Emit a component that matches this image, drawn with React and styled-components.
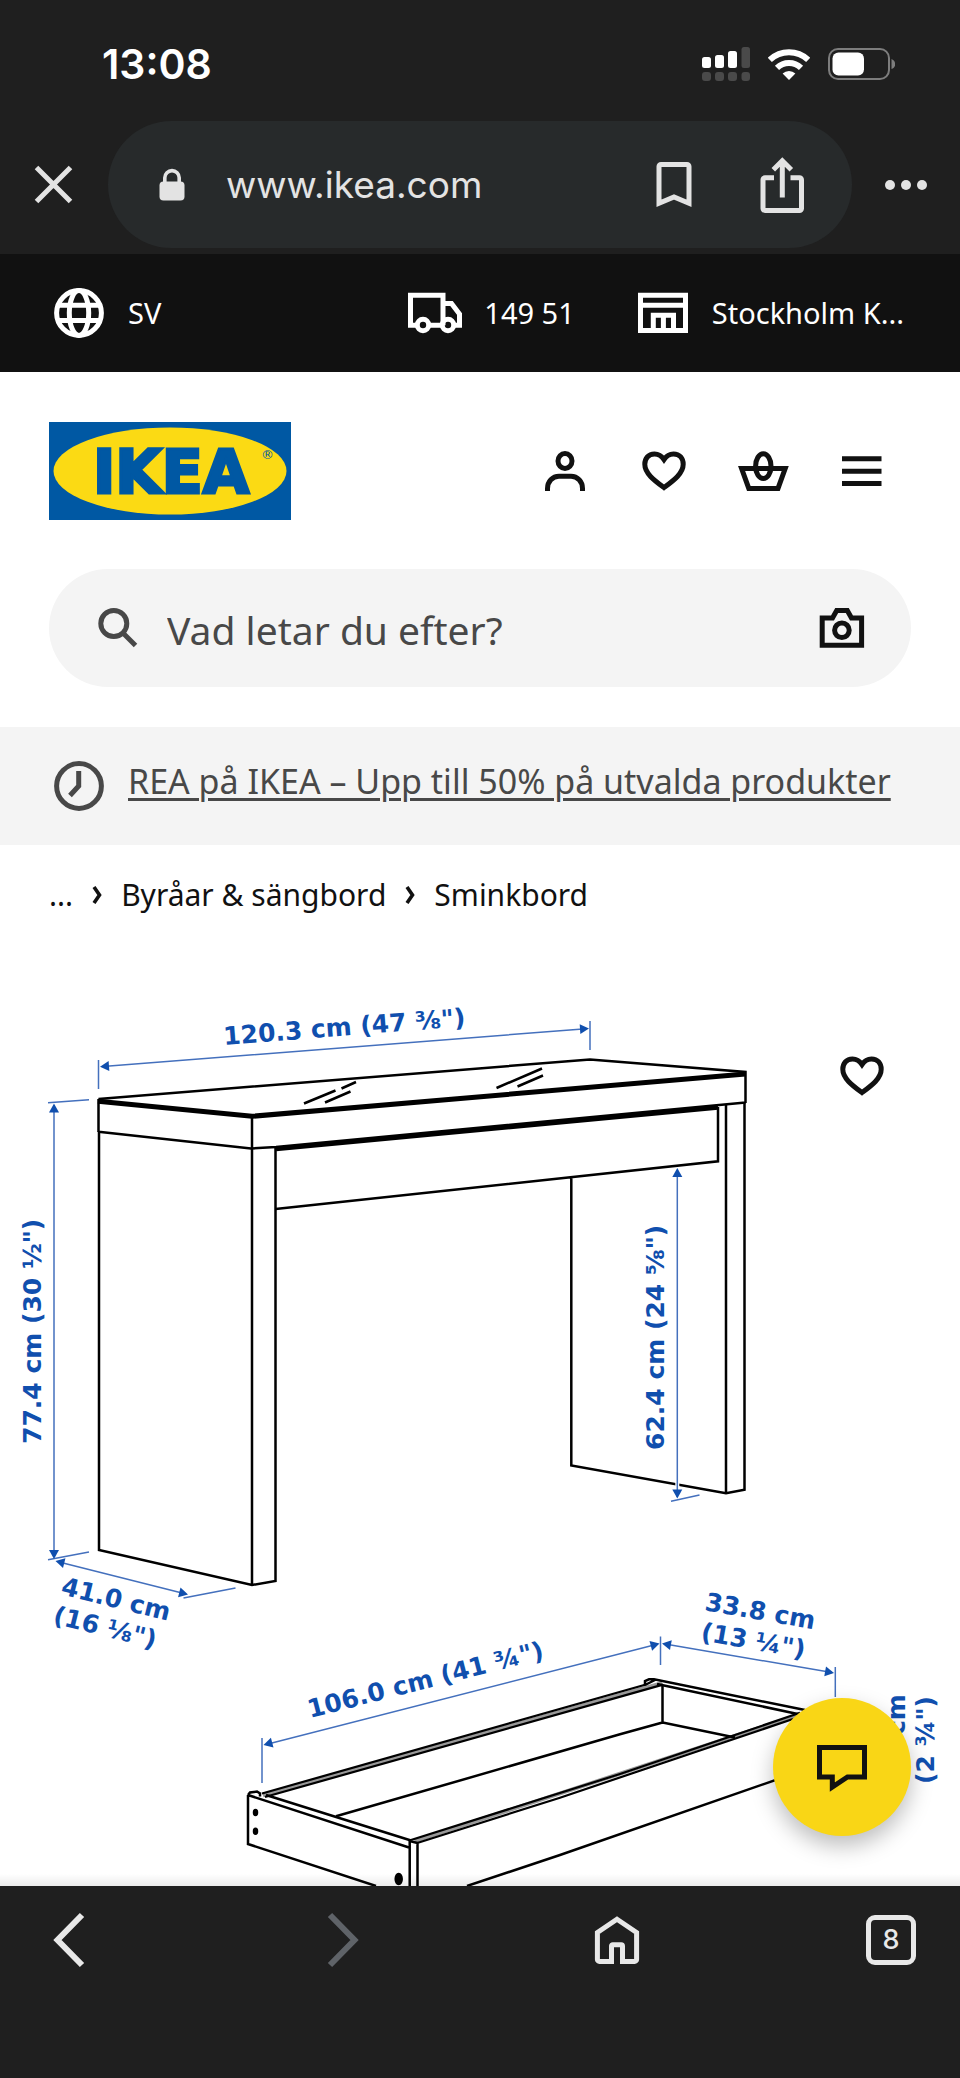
import React from "react";
import styled, { createGlobalStyle } from "styled-components";

const GlobalStyle = createGlobalStyle`
  *, *::before, *::after { box-sizing: border-box; }
  body { margin: 0; background: #1f1f1f; font-family: "Noto Sans", sans-serif; color: #111; }
  button, input { font: inherit; color: inherit; }
`;

const Screen = styled.div`
  display: flex;
  flex-direction: column;
  min-height: 100vh;
  background: #fff;
`;

/* Shared pieces */

const Glyph = styled.svg`
  display: block;
  flex: none;
  width: ${(p) => p.$w || 60}px;
  height: ${(p) => p.$h || 60}px;
  fill: none;
  stroke: currentColor;
  stroke-width: 5;
`;

function Icon({ children, w = 60, h = 60 }) {
  return (
    <Glyph $w={w} $h={h} viewBox={`0 0 ${w} ${h}`} aria-hidden="true">
      {children}
    </Glyph>
  );
}

const IconButton = styled.button`
  display: flex;
  align-items: center;
  justify-content: center;
  flex: none;
  width: ${(p) => p.$size || 60}px;
  height: ${(p) => p.$size || 60}px;
  padding: 0;
  border: 0;
  background: none;
  color: inherit;
  cursor: pointer;
  &:disabled { color: #5f6368; }
`;

/* Browser chrome */

const Chrome = styled.div`
  background: #1f1f1f;
  color: #e3e3e3;
  padding-bottom: 6px;
  font-family: Inter, sans-serif;
`;

const StatusBar = styled.div`
  display: flex;
  align-items: center;
  justify-content: space-between;
  padding: 39px 65px 32px 102px;
  color: #fff;
`;

const Clock = styled.time`
  font-size: 41px;
  line-height: 50px;
  font-weight: 600;
`;

const StatusIcons = styled.div`
  display: flex;
  align-items: center;
  gap: 18px;
`;

const AddressRow = styled.div`
  display: flex;
  align-items: center;
  gap: 24px;
  padding: 0 24px;
`;

const Omnibox = styled.div`
  display: flex;
  align-items: center;
  flex: 1;
  min-width: 0;
  height: 127px;
  padding: 0 40px 0 34px;
  border-radius: 64px;
  background: #272a2b;
`;

const Address = styled.input`
  flex: 1;
  min-width: 0;
  margin-left: 24px;
  padding: 0;
  border: 0;
  outline: 0;
  background: none;
  font-size: 37px;
  line-height: 48px;
`;

const OmniboxActions = styled.div`
  display: flex;
  gap: 48px;
`;

/* Store header */

const UtilityBar = styled.nav`
  display: flex;
  align-items: center;
  gap: 58px;
  height: 118px;
  padding: 0 56px 0 49px;
  background: #111;
  color: #fff;
`;

const UtilityLink = styled.a`
  display: flex;
  align-items: center;
  gap: 19px;
  margin-right: ${(p) => (p.$push ? "auto" : "0")};
  color: inherit;
  text-decoration: none;
  font-size: 29px;
  line-height: 40px;
  white-space: nowrap;
`;

const StoreHeader = styled.header`
  display: flex;
  flex-direction: column;
  gap: 49px;
  padding: 50px 49px 40px;
`;

const HeaderRow = styled.div`
  display: flex;
  align-items: center;
  justify-content: space-between;
`;

const LogoLink = styled.a`
  display: block;
  svg { display: block; width: 242px; height: 98px; }
`;

const LogoText = styled.text`
  font-family: "DejaVu Sans", sans-serif;
  font-weight: 700;
  font-size: 60px;
  fill: #0058a3;
  stroke: #0058a3;
  stroke-width: 3;
  text-anchor: middle;
`;

const LogoMark = styled.text`
  font-family: "DejaVu Sans", sans-serif;
  font-size: 13px;
  fill: #0058a3;
`;

const HeaderActions = styled.div`
  display: flex;
  gap: 1px;
`;

const SearchBox = styled.form`
  display: flex;
  align-items: center;
  gap: 19px;
  height: 118px;
  padding: 0 39px;
  border-radius: 59px;
  background: #f4f4f4;
  color: #484848;
`;

const SearchInput = styled.input`
  flex: 1;
  min-width: 0;
  padding: 4px 0 0;
  border: 0;
  outline: 0;
  background: none;
  font-size: 39px;
  line-height: 56px;
  &::placeholder { color: #484848; opacity: 1; }
`;

const CameraButton = styled(IconButton)`
  color: #111;
`;

const Banner = styled.div`
  display: flex;
  align-items: center;
  gap: 19px;
  height: 118px;
  padding: 0 49px;
  background: #f4f4f4;
  color: #484848;
`;

const BannerLink = styled.a`
  padding-bottom: 10px;
  color: inherit;
  font-size: 34px;
  line-height: 48px;
  white-space: nowrap;
  text-decoration-thickness: 3px;
  text-underline-offset: 4px;
`;

const Breadcrumb = styled.nav`
  padding: 30px 49px 45px;
  ol { display: flex; align-items: center; gap: 19px; margin: 0; padding: 0; list-style: none; }
  li { display: flex; align-items: center; gap: 19px; }
  a { color: inherit; text-decoration: none; font-size: 30px; line-height: 40px; }
`;

/* Product drawing */

const Product = styled.main`
  position: relative;
  flex: 1;
  overflow: hidden;
  &::after {
    content: "";
    position: absolute;
    inset: auto 0 0;
    height: 12px;
    background: linear-gradient(rgba(0, 0, 0, 0), rgba(0, 0, 0, 0.08));
  }
`;

const Drawing = styled.svg`
  display: block;
  width: 100%;
  fill: none;
`;

const Outline = styled.g`
  stroke: #000;
  stroke-width: 2.5;
`;

const Dimensions = styled.g`
  stroke: #4470bd;
  stroke-width: 1.5;
`;

const DimText = styled.text`
  font-family: "DejaVu Sans", sans-serif;
  font-size: 25px;
  font-weight: 700;
  fill: #104fae;
  stroke: none;
`;

const FavouriteButton = styled(IconButton)`
  position: absolute;
  top: 67px;
  right: 49px;
`;

const ChatButton = styled(IconButton)`
  position: absolute;
  right: 49px;
  bottom: 50px;
  z-index: 1;
  border-radius: 50%;
  background: #f9d616;
  box-shadow: 0 10px 22px rgba(0, 0, 0, 0.26);
`;

const BottomBar = styled.nav`
  display: flex;
  align-items: center;
  justify-content: space-between;
  padding: 24px 39px 108px;
  background: #1f1f1f;
  color: #e8e8e8;
`;

const TabCount = styled.span`
  display: flex;
  align-items: center;
  justify-content: center;
  width: 50px;
  height: 50px;
  border: 5px solid currentColor;
  border-radius: 9px;
  font-family: Inter, sans-serif;
  font-size: 27px;
  line-height: 32px;
  font-weight: 500;
`;

const HEART =
  "M30 18.5C27.5 14.8 24 13 20.5 13C14.2 13 10.8 17.6 10.8 23.3C10.8 32.5 20.5 39.5 30 46.6C39.5 39.5 49.2 32.5 49.2 23.3C49.2 17.6 45.8 13 39.5 13C36 13 32.5 14.8 30 18.5Z";

function ArrowHead({ x, y, angle }) {
  return (
    <path d="M0 0L-9 -5V5Z" fill="#104fae" stroke="none" transform={`translate(${x} ${y}) rotate(${angle})`} />
  );
}

function Label({ x, y, angle, children }) {
  return <DimText transform={`translate(${x} ${y}) rotate(${angle})`}>{children}</DimText>;
}

function Crumb({ children, last }) {
  return (
    <li>
      <a href="#kategori">{children}</a>
      {!last && (
        <Icon w={10} h={18}>
          <path d="M2 1L7.5 9L2 17" strokeWidth="3.6" />
        </Icon>
      )}
    </li>
  );
}

function ProductDrawing() {
  return (
    <Drawing viewBox="0 960 960 926" role="img" aria-label="Måttskiss av sminkbord">
      <Outline>
        <path d="M98.5 1099L590 1059.5L745.5 1072V1103M98.5 1099V1132M98.5 1131.7L251 1148.5L276 1147L745.5 1102.5" />
        <path d="M98 1101.3L252 1116.3L745.5 1074" strokeWidth="5" />
        <path d="M276 1149L718 1107.5" strokeWidth="4.5" />
        <path d="M99 1131V1550L252 1585L275.5 1581V1148M252 1116V1585" />
        <path d="M718 1107V1161.3L275.5 1209M726 1105V1493.3M744.5 1103V1489.8L726 1493.3L571.3 1465.4V1178" />
        <path d="M304 1103.5L335.5 1090.5M325 1102.5L350.5 1091.5M341.5 1088.5L356 1082M496.5 1088L542 1068.5M517.5 1086.5L543 1075.5" />

        <path d="M263 1795.3L662 1683.2M414.5 1841.2L800 1714.6" stroke="#999" strokeWidth="4" />
        <path d="M262 1793.5L646 1684.5M265 1797L663 1684.6" strokeWidth="2.2" />
        <path d="M248 1795V1844L376 1886M248 1795L409 1847.5M266 1795L411 1840.5" />
        <path d="M248 1795L250 1792.5L257 1791.5L260 1793.5V1796.5" />
        <path d="M409.7 1886V1841L417.5 1843V1886" />
        <path d="M411 1840L620 1774L800 1712.8M418 1842.7L560 1797.7L793 1719" strokeWidth="2.2" />
        <path d="M645 1685V1681L649 1679.3H654L805 1710M645 1685L655 1680M657 1684L800 1714.5" />
        <path d="M662.5 1685V1722.5L735 1737.5M662.5 1722.5L620 1734.3L336 1816.3M467 1886L560 1855L790 1775" />
        <g fill="#000">
          <ellipse cx="255.5" cy="1812.5" rx="1.5" ry="2.5" />
          <ellipse cx="255.5" cy="1831.2" rx="1.5" ry="2.5" />
          <ellipse cx="398.7" cy="1879" rx="3" ry="5" />
        </g>
      </Outline>

      <Dimensions>
        <path d="M98.5 1060V1089M590 1021V1050M103 1066.5L586 1028.7" />
        <ArrowHead x={100} y={1066.7} angle={176} />
        <ArrowHead x={589} y={1028.5} angle={-4} />
        <Label x={224} y={1045} angle={-4.5}>120.3 cm (47 ⅜")</Label>

        <path d="M48 1102.8L89 1099.8M54 1105V1557M48 1559.7L89 1552" />
        <ArrowHead x={54} y={1103.5} angle={-90} />
        <ArrowHead x={54} y={1559} angle={90} />
        <Label x={41} y={1444} angle={-90}>77.4 cm (30 ½")</Label>

        <path d="M58 1561.7L186 1594M183.5 1598L235.5 1588" />
        <ArrowHead x={55.5} y={1561} angle={194} />
        <ArrowHead x={188} y={1594.5} angle={14} />
        <Label x={60} y={1594} angle={14}>41.0 cm</Label>
        <Label x={52} y={1623} angle={14}>(16 ⅛")</Label>

        <path d="M677.3 1482V1488" stroke="#fff" strokeWidth="4" />
        <path d="M677.3 1170V1497M671 1501.3L699.5 1495" />
        <ArrowHead x={677.3} y={1168} angle={-90} />
        <ArrowHead x={677.3} y={1498.5} angle={90} />
        <Label x={664} y={1450} angle={-90}>62.4 cm (24 ⅝")</Label>

        <path d="M262 1738V1783M660.5 1636.5V1665M266 1744.4L657 1644.3" />
        <ArrowHead x={263.5} y={1745} angle={165} />
        <ArrowHead x={659.5} y={1643.5} angle={-15} />
        <Label x={310} y={1718} angle={-14.3}>106.0 cm (41 ¾")</Label>

        <path d="M665 1644L832 1672.5M835.3 1667V1697" />
        <ArrowHead x={662} y={1643.5} angle={190} />
        <ArrowHead x={834} y={1673} angle={10} />
        <Label x={704} y={1610} angle={10}>33.8 cm</Label>
        <Label x={700} y={1640} angle={10}>(13 ¼")</Label>

        <Label x={905} y={1735} angle={-90}>cm</Label>
        <Label x={934} y={1784} angle={-90}>(2 ¾")</Label>
      </Dimensions>
    </Drawing>
  );
}

export default function App() {
  return (
    <Screen>
      <GlobalStyle />
      <Chrome>
        <StatusBar>
          <Clock>13:08</Clock>
          <StatusIcons>
            <Icon w={48} h={34}>
              <g fill="#fff" stroke="none">
                <rect x="0" y="10" width="9" height="11" rx="2.5" />
                <rect x="13" y="8" width="9" height="13" rx="2.5" />
                <rect x="26" y="4" width="9" height="17" rx="2.5" />
              </g>
              <g fill="#4a4a4a" stroke="none">
                <rect x="39.5" y="0" width="8.5" height="21" rx="2.5" />
                <rect x="0" y="25" width="9" height="9" rx="3" />
                <rect x="13" y="25" width="9" height="9" rx="3" />
                <rect x="26" y="25" width="9" height="9" rx="3" />
                <rect x="39.5" y="25" width="8.5" height="9" rx="3" />
              </g>
            </Icon>
            <Icon w={42} h={31}>
              <path d="M1.8 10.9A28 28 0 0 1 40.2 10.9" strokeWidth="6" />
              <path d="M9 18.8A17.3 17.3 0 0 1 33 18.8" strokeWidth="6" />
              <path d="M21 31L14.6 24.4A9.4 9.4 0 0 1 27.4 24.4Z" fill="#fff" stroke="none" />
            </Icon>
            <Icon w={67} h={32}>
              <rect x="1" y="1" width="60" height="30" rx="9" stroke="#7d7d7d" strokeWidth="2" />
              <rect x="4.5" y="4.5" width="31.5" height="23" rx="6" fill="#fff" stroke="none" />
              <path d="M63.5 11C68.5 13 68.5 19.5 63.5 21Z" fill="#7d7d7d" stroke="none" />
            </Icon>
          </StatusIcons>
        </StatusBar>
        <AddressRow>
          <IconButton aria-label="Stäng">
            <Icon><path d="M12.5 12.5L46.5 46.5M46.5 12.5L12.5 46.5" /></Icon>
          </IconButton>
          <Omnibox>
            <Icon>
              <rect x="17.5" y="26.5" width="25" height="19" rx="4" fill="currentColor" stroke="none" />
              <path d="M22.8 28V22.8A7.2 7.2 0 0 1 37.2 22.8V28" strokeWidth="3.6" />
            </Icon>
            <Address aria-label="Adress" defaultValue="www.ikea.com" />
            <OmniboxActions>
              <IconButton aria-label="Bokmärke">
                <Icon><path d="M15 48.2V11.5A2 2 0 0 1 17 9.5H43A2 2 0 0 1 45 11.5V48.2L30 42Z" /></Icon>
              </IconButton>
              <IconButton aria-label="Dela">
                <Icon>
                  <path d="M22 22.8H13A2 2 0 0 0 11 24.8V53.5A2 2 0 0 0 13 55.5H47.5A2 2 0 0 0 49.5 53.5V24.8A2 2 0 0 0 47.5 22.8H38.5" />
                  <path d="M30.3 42.5V6M21.3 14.7L30.3 5.7L39.3 14.7" />
                </Icon>
              </IconButton>
            </OmniboxActions>
          </Omnibox>
          <IconButton aria-label="Mer">
            <Icon>
              <g fill="currentColor" stroke="none">
                <circle cx="14" cy="30" r="5" />
                <circle cx="30" cy="30" r="5" />
                <circle cx="46" cy="30" r="5" />
              </g>
            </Icon>
          </IconButton>
        </AddressRow>
      </Chrome>

      <UtilityBar>
        <UtilityLink href="#sprak" $push>
          <Icon>
            <circle cx="30" cy="30" r="22.4" />
            <ellipse cx="30" cy="30" rx="9.7" ry="22.4" />
            <path d="M9 22.3H51M9 37.6H51" />
          </Icon>
          SV
        </UtilityLink>
        <UtilityLink href="#postnummer">
          <Icon>
            <path d="M11 42.2H5.5V12.3H38V42.2M25 42.2H36M38 20.5H46.5L54.5 31V42.2H50" />
            <circle cx="18" cy="42" r="5.7" />
            <circle cx="43" cy="42" r="5.7" />
          </Icon>
          149 51
        </UtilityLink>
        <UtilityLink href="#varuhus">
          <Icon>
            <path d="M7.5 12.3H52.5V47.4H7.5ZM7.5 22.3H52.5M20.3 47V32.2H40.5V47M30.4 32V47" />
          </Icon>
          Stockholm K...
        </UtilityLink>
      </UtilityBar>

      <StoreHeader>
        <HeaderRow>
          <LogoLink href="#start" aria-label="IKEA">
            <svg viewBox="0 0 242 98">
              <rect width="242" height="98" fill="#0058a3" />
              <ellipse cx="121" cy="49" rx="116.5" ry="43.5" fill="#fbda14" />
              <LogoText x="122" y="71">IKEA</LogoText>
              <LogoMark x="212" y="37">®</LogoMark>
            </svg>
          </LogoLink>
          <HeaderActions>
            <IconButton $size={98} aria-label="Logga in">
              <Icon>
                <ellipse cx="30" cy="20" rx="7" ry="7.4" />
                <path d="M12.5 50V47.5C12.5 40.5 17.5 35.3 24 35.3H36C42.5 35.3 47.5 40.5 47.5 47.5V50" />
              </Icon>
            </IconButton>
            <IconButton $size={98} aria-label="Inköpslista">
              <Icon><path d={HEART} /></Icon>
            </IconButton>
            <IconButton $size={98} aria-label="Varukorg">
              <Icon>
                <path d="M8.6 27.5H52.2L45 47.4H15.8Z" />
                <ellipse cx="30.3" cy="25.2" rx="7.7" ry="12.4" />
              </Icon>
            </IconButton>
            <IconButton $size={98} aria-label="Meny">
              <Icon><path d="M10 17.7H49.5M10 30.2H49.5M10 42.4H49.5" /></Icon>
            </IconButton>
          </HeaderActions>
        </HeaderRow>
        <SearchBox role="search">
          <Icon>
            <circle cx="25.8" cy="25.5" r="13" />
            <path d="M34.5 34.5L47.5 47.5" />
          </Icon>
          <SearchInput type="text" aria-label="Sök" placeholder="Vad letar du efter?" />
          <CameraButton type="button" aria-label="Sök med kamera">
            <Icon>
              <path d="M10.2 20H20.5L24.7 12.5H35.3L39.5 20H49.6V47.2H10.2Z" />
              <circle cx="29.9" cy="32.3" r="7.3" />
            </Icon>
          </CameraButton>
        </SearchBox>
      </StoreHeader>

      <Banner>
        <Icon>
          <circle cx="30" cy="30" r="22.4" />
          <path d="M29.7 15V30L21 39.5" />
        </Icon>
        <BannerLink href="#rea">REA på IKEA – Upp till 50% på utvalda produkter</BannerLink>
      </Banner>

      <Breadcrumb aria-label="Brödsmulor">
        <ol>
          <Crumb>...</Crumb>
          <Crumb>Byråar &amp; sängbord</Crumb>
          <Crumb last>Sminkbord</Crumb>
        </ol>
      </Breadcrumb>

      <Product>
        <ProductDrawing />
        <FavouriteButton $size={98} aria-label="Spara i inköpslista">
          <Icon><path d={HEART} /></Icon>
        </FavouriteButton>
        <ChatButton $size={138} aria-label="Chatta med oss">
          <Icon><path d="M7.5 10.5H52.5V40H35.5L20.3 50V40H7.5Z" /></Icon>
        </ChatButton>
      </Product>

      <BottomBar>
        <IconButton aria-label="Bakåt">
          <Icon><path d="M43 5L18.5 30L43 55" strokeWidth="6" /></Icon>
        </IconButton>
        <IconButton aria-label="Framåt" disabled>
          <Icon><path d="M17 5L41.5 30L17 55" strokeWidth="6" /></Icon>
        </IconButton>
        <IconButton aria-label="Hem">
          <Icon>
            <path d="M30 9.2L49.6 22.5V49.4A2 2 0 0 1 47.6 51.4H35.5V36A1.3 1.3 0 0 0 34.2 34.7H25.8A1.3 1.3 0 0 0 24.5 36V51.4H12.4A2 2 0 0 1 10.4 49.4V22.5Z" />
          </Icon>
        </IconButton>
        <IconButton aria-label="Flikar">
          <TabCount>8</TabCount>
        </IconButton>
      </BottomBar>
    </Screen>
  );
}
